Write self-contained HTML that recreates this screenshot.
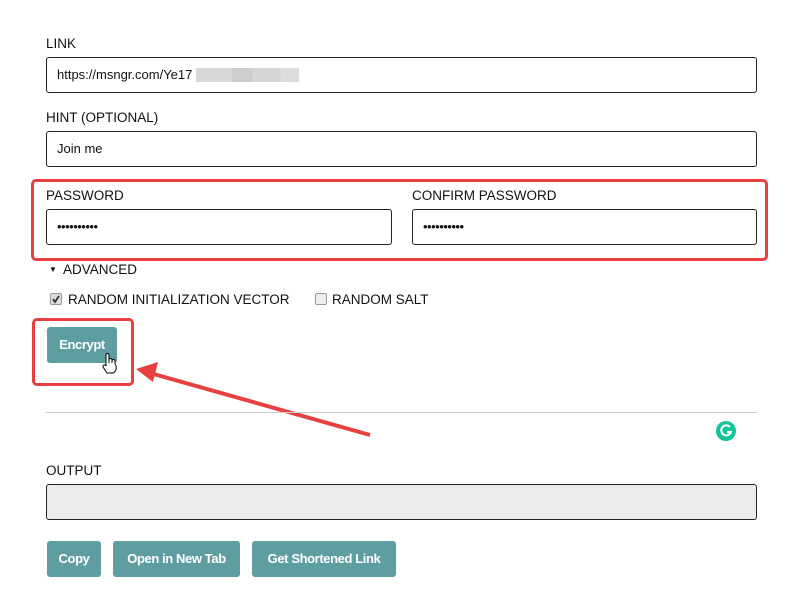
<!DOCTYPE html>
<html><head><style>
*{box-sizing:border-box;margin:0;padding:0}
body{width:808px;height:606px;background:#fff;position:relative;font-family:"Liberation Sans",Arial,sans-serif;color:#111;overflow:hidden}
.a{position:absolute}
.lbl{position:absolute;font-size:13.5px;line-height:15px}
.in{position:absolute;border:1px solid #222;border-radius:3px;background:#fff;font-size:13px;padding-left:10px;line-height:33px;height:36px}
.btn{position:absolute;background:#5f9ea0;color:#fff;border-radius:3px;font-family:"Liberation Sans",sans-serif;font-weight:bold;font-size:13px;letter-spacing:-0.4px;height:36px;line-height:36px;text-align:center}
.dots{font-size:13px;letter-spacing:-0.5px}
.cb{position:absolute;width:12px;height:12px;border:1px solid #999;border-radius:2px;background:#ddd}
</style></head><body>
<div class="lbl" style="left:46px;top:36px">LINK</div>
<div class="in" style="left:46px;top:57px;width:711px">https://msngr.com/Ye17</div>
<div class="a" style="left:196px;top:68px;width:103px;height:14px;background:linear-gradient(90deg,#d8d8d6 0,#d8d8d6 35%,#cdcdcf 35%,#cdcdcf 55%,#d6d6d6 55%,#d6d6d6 82%,#dcdcdc 82%)"></div>
<div class="lbl" style="left:46px;top:110px">HINT (OPTIONAL)</div>
<div class="in" style="left:46px;top:131px;width:711px">Join me</div>
<div class="a" style="left:31px;top:179px;width:737px;height:82px;border:3px solid #e8403f;border-radius:5px"></div>
<div class="lbl" style="left:46px;top:188px">PASSWORD</div>
<div class="lbl" style="left:412px;top:188px">CONFIRM PASSWORD</div>
<div class="in dots" style="left:46px;top:209px;width:346px">••••••••••</div>
<div class="in dots" style="left:412px;top:209px;width:345px">••••••••••</div>
<div class="lbl" style="left:49px;top:262px;font-size:8px">▼</div>
<div class="lbl" style="left:63px;top:262px">ADVANCED</div>
<div class="cb" style="left:50px;top:293px"><svg width="10" height="10" style="position:absolute;left:0;top:0"><path d="M2 5 L4 8 L8 2" stroke="#333" stroke-width="1.8" fill="none"/></svg></div>
<div class="lbl" style="left:68px;top:292px">RANDOM INITIALIZATION VECTOR</div>
<div class="cb" style="left:315px;top:293px;background:#eee"></div>
<div class="lbl" style="left:332px;top:292px">RANDOM SALT</div>
<div class="btn" style="left:47px;top:327px;width:70px">Encrypt</div>
<div class="a" style="left:32px;top:318px;width:102px;height:68px;border:3px solid #e8403f;border-radius:5px"></div>
<svg class="a" style="left:0;top:0" width="808" height="606">
<path d="M106 366 v-11 a1.5 1.5 0 0 1 3 0 v8 v-3 a1.5 1.5 0 0 1 3 0 v3 v-2 a1.5 1.5 0 0 1 3 0 v3 a6 6 0 0 1 -2 9 h-6 l-4 -6 a1.5 1.5 0 0 1 3 -1 z" fill="#fff" stroke="#000" stroke-width="1"/>
<line x1="370" y1="435" x2="150" y2="373" stroke="#e8403f" stroke-width="4"/>
<path d="M136 369 L158 362 L153 382 Z" fill="#e8403f"/>
<line x1="46" y1="412.5" x2="757" y2="412.5" stroke="#ccc" stroke-width="1"/>
<circle cx="726" cy="431" r="10" fill="#15c39a"/>
<path d="M730 427 a5 5 0 1 0 1 5 h-4" stroke="#fff" stroke-width="2" fill="none"/>
</svg>
<div class="lbl" style="left:46px;top:463px">OUTPUT</div>
<div class="in" style="left:46px;top:484px;width:711px;background:#ebebeb"></div>
<div class="btn" style="left:47px;top:541px;width:54px">Copy</div>
<div class="btn" style="left:113px;top:541px;width:127px">Open in New Tab</div>
<div class="btn" style="left:252px;top:541px;width:144px">Get Shortened Link</div>
</body></html>
